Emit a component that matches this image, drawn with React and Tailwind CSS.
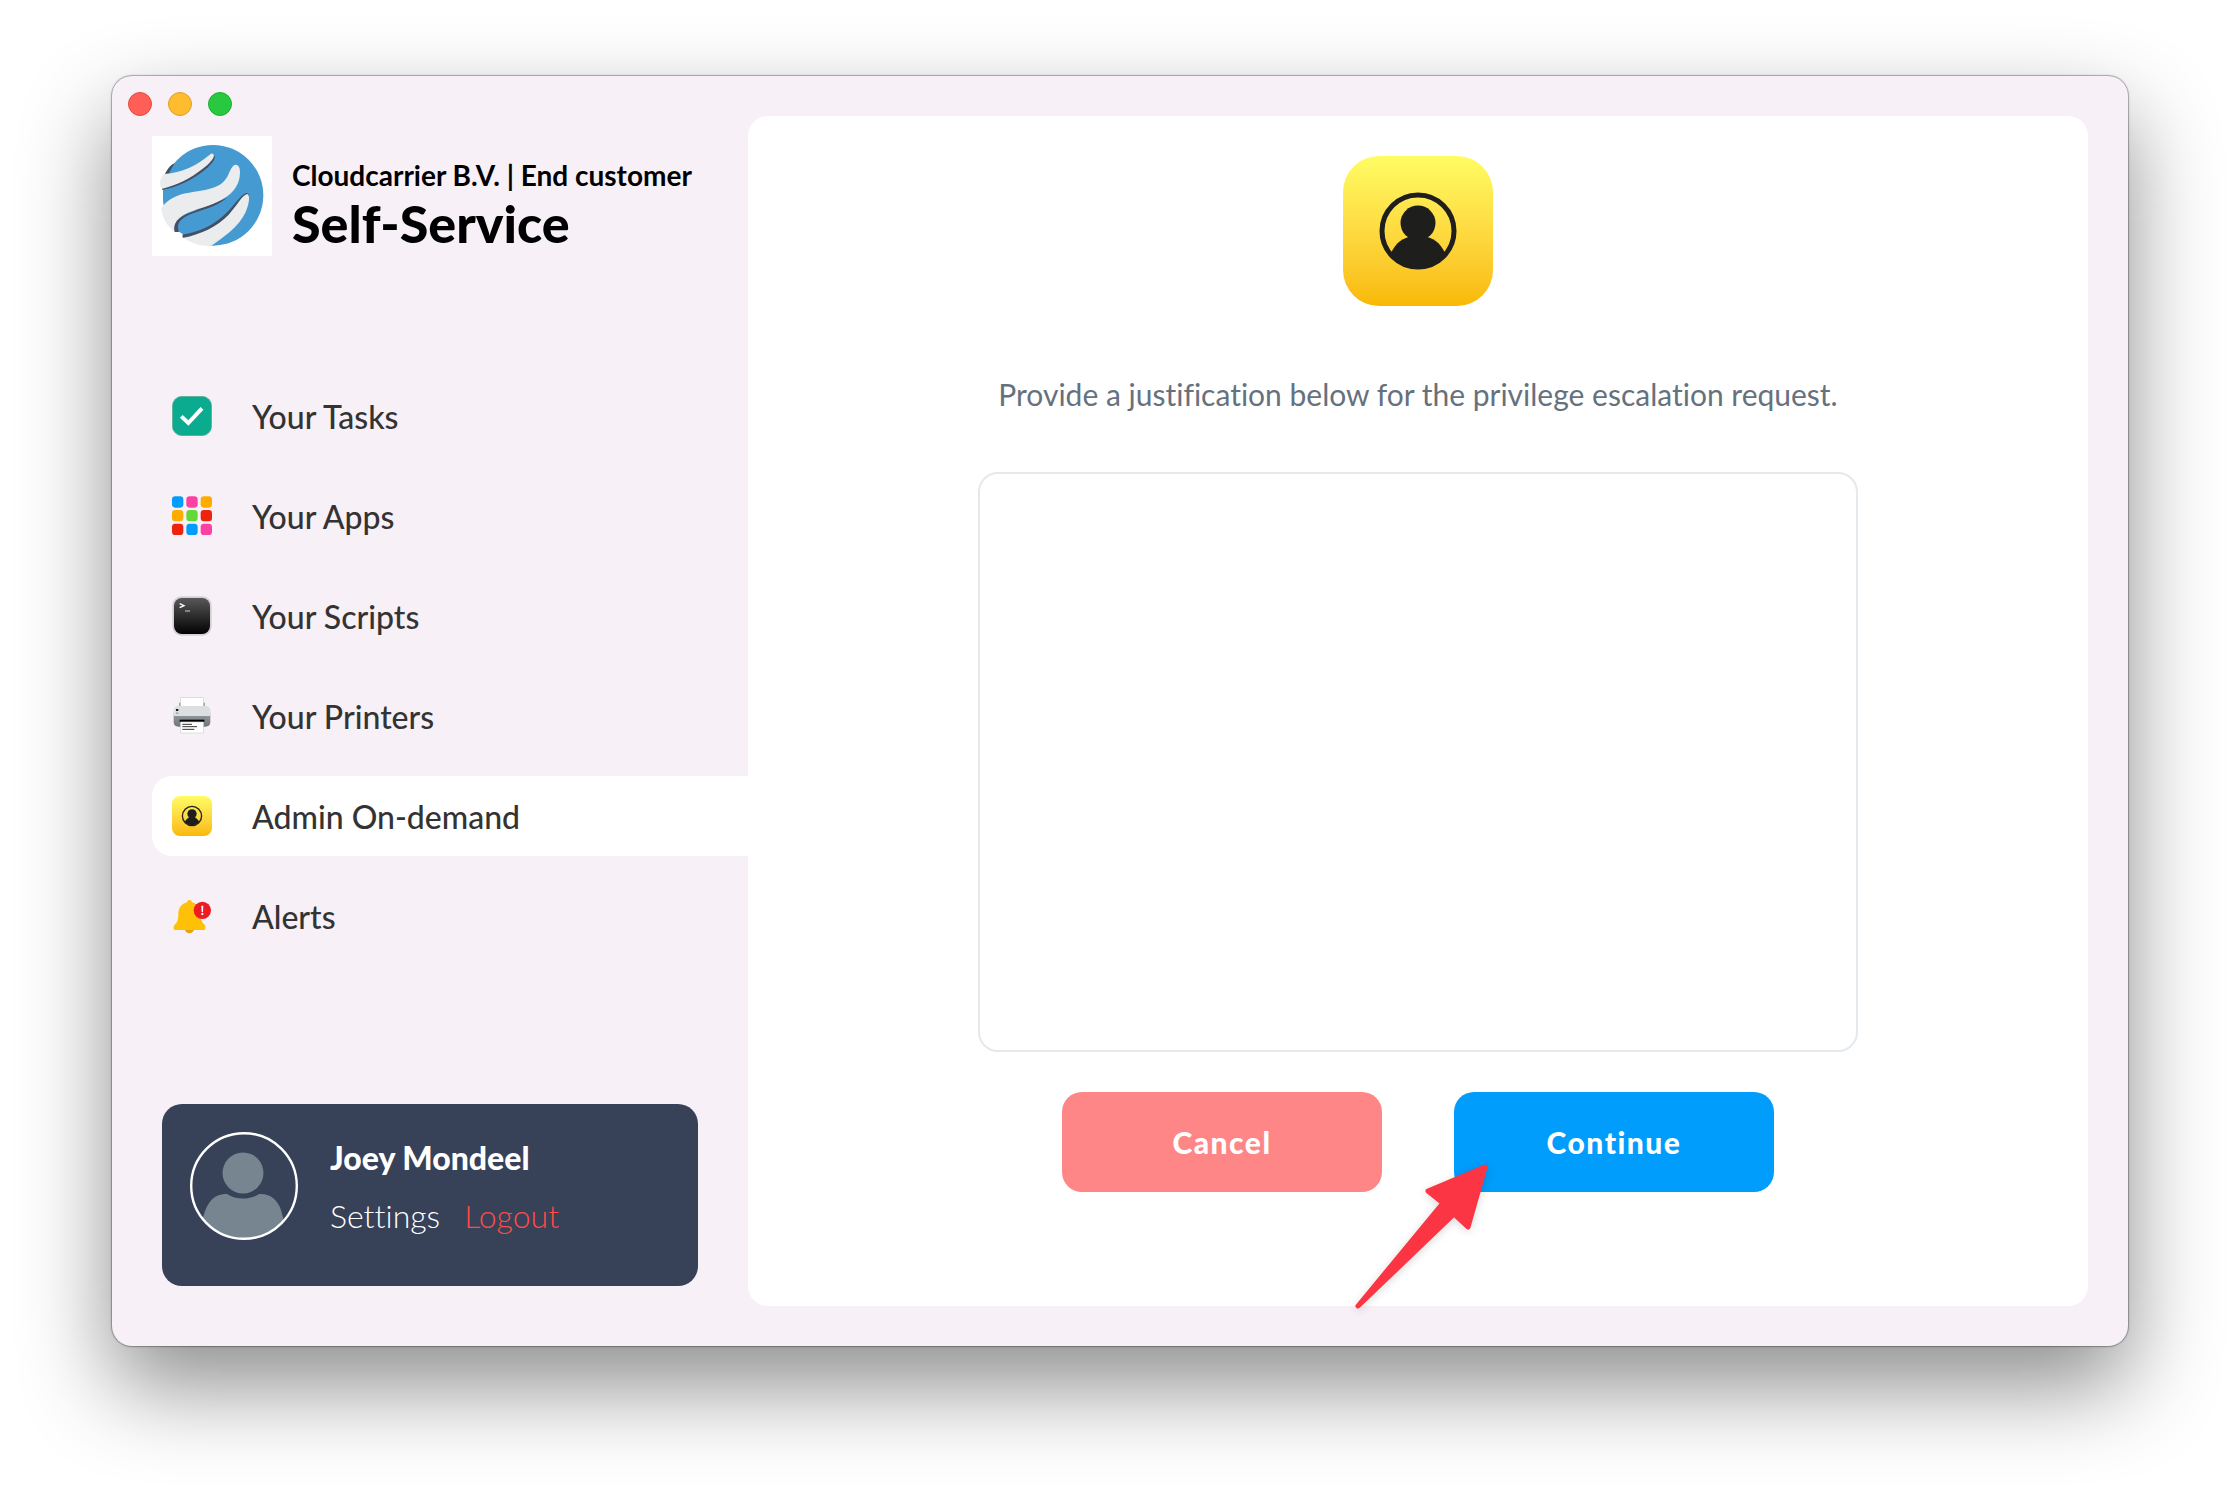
import { clsx } from "clsx";

function Logo() {
  return (
    <svg viewBox="36 18 360 360" className="size-30 shrink-0 bg-white" role="img" aria-label="Cloudcarrier">
      <circle cx="219" cy="196" r="151" fill="#459bd1" />
      <path d="M60 125 L70 125 L68 230 L50 240 Z" fill="#fff" />
      <path d="M72 138 C80 122 90 104 104 100 C98 110 92 120 86 132 Z" fill="#454f66" />
      <path d="M66 180 C110 172 155 152 193 121 C208 108 222 95 225 80 L218 72 L68 168 Z" fill="#454f66" />
      <path d="M74 132 C125 128 172 106 209 74 Q219 66 222 77 C220 88 206 102 190 115 C150 147 110 166 67 176 Q59 170 60 156 Q64 136 74 132 Z" fill="#ebecee" />
      <path d="M262 203 C225 232 190 238 155 251 C130 261 116 272 114 288 L116 306 Q108 311 102 304 C98 285 108 268 135 254 Z" fill="#454f66" />
      <path d="M64 236 C78 212 102 198 137 190 C195 178 238 180 262 140 C271 122 276 104 288 104 C301 106 302 126 298 146 C290 184 256 206 220 221 C180 237 132 245 110 272 C102 284 101 294 104 305 C82 290 67 264 64 236 Z" fill="#ebecee" />
      <path d="M126 314 C175 308 225 284 258 250 C290 218 306 188 322 189 L328 196 L270 262 L160 326 L127 323 Z" fill="#454f66" />
      <path d="M322 192 C331 196 328 222 316 248 C296 290 250 322 214 347 C178 350 148 336 130 323 C180 314 232 290 266 254 C292 226 307 194 322 192 Z" fill="#ebecee" />
      <path d="M100 306 L118 306 L128 312 L127 322 L134 328 L110 330 L92 306 Z" fill="#fff" />
    </svg>
  );
}

function TasksIcon() {
  return (
    <svg viewBox="0 0 120 120" className="size-10">
      <rect x="1" y="1" width="118" height="118" rx="29" fill="#0aab8e" stroke="#6fa79c" strokeWidth="2" />
      <path d="M28 61 L49 81 L90 37" fill="none" stroke="#fff" strokeWidth="12" />
    </svg>
  );
}

const APP_COLORS = [
  ["#029dfb", "#fc41a4", "#feac02"],
  ["#feac02", "#62d937", "#ef220d"],
  ["#ef220d", "#029dfb", "#fc41a4"],
];

function AppsIcon() {
  return (
    <svg viewBox="0 0 120 120" className="size-10">
      {APP_COLORS.map((row, y) =>
        row.map((color, x) => (
          <rect key={`${x}-${y}`} x={x * 43} y={y * 41 + 1} width="34" height="34" rx="10" fill={color} />
        ))
      )}
    </svg>
  );
}

function ScriptsIcon() {
  return (
    <svg viewBox="0 0 120 120" className="size-10">
      <defs>
        <linearGradient id="scripts" x2="0" y2="1">
          <stop stopColor="#585858" />
          <stop offset="1" stopColor="#020202" />
        </linearGradient>
      </defs>
      <rect x="1" y="1" width="118" height="118" rx="28" fill="#d2d0d2" />
      <rect x="6" y="6" width="108" height="108" rx="24" fill="url(#scripts)" />
      <path d="M23 23 L36 29 L23 35" fill="none" stroke="#fff" strokeWidth="4" />
      <path d="M39 45 H54" stroke="#aaa" strokeWidth="4" />
    </svg>
  );
}

function PrintersIcon() {
  return (
    <svg viewBox="0 0 120 120" className="size-10">
      <defs>
        <linearGradient id="printer" x2="0" y2="1">
          <stop stopColor="#999da2" />
          <stop offset="1" stopColor="#6f757c" />
        </linearGradient>
      </defs>
      <rect x="22" y="20" width="76" height="20" fill="#7a7f85" />
      <rect x="26" y="5" width="68" height="32" fill="#fff" stroke="#d6d3d8" strokeWidth="2" />
      <path d="M5 50 H115 V78 Q115 92 100 92 H20 Q5 92 5 78 Z" fill="url(#printer)" />
      <path d="M5 60 V44 Q6 30 19 30 H101 Q114 30 115 44 V60 Z" fill="#dcdfdf" />
      <rect x="12" y="39" width="7" height="6" fill="#151515" />
      <rect x="12" y="49" width="7" height="5" fill="#aaa" />
      <rect x="23" y="71" width="74" height="7" fill="#000" />
      <rect x="26" y="78" width="68" height="33" fill="#fff" stroke="#d2cfd4" strokeWidth="2" />
      <path d="M31 85 H60 M31 92 H75 M31 100 H67" stroke="#333" strokeWidth="3" />
    </svg>
  );
}

function AdminIcon({ className }) {
  return (
    <div className={clsx("bg-linear-to-b from-[#fffc63] to-[#f9b900]", className)}>
      <svg viewBox="0 0 150 150" className="size-full">
        <circle cx="75" cy="75" r="36" fill="none" stroke="#1e1e1c" strokeWidth="5" />
        <circle cx="75" cy="67" r="17.5" fill="#1e1e1c" />
        <path d="M48 97 C53 86 61 82 66 81 H84 C89 82 97 86 102 97 A35 35 0 0 1 48 97 Z" fill="#1e1e1c" />
      </svg>
    </div>
  );
}

function AlertsIcon() {
  return (
    <svg viewBox="0 0 120 120" className="size-10">
      <path d="M38 100 H67 Q62 112 52 112 Q42 112 38 100 Z" fill="#e5a405" />
      <path
        d="M45 19 Q46 12 52 12 Q59 12 60 19 C76 23 85 36 85 52 C85 68 87 76 96 84 Q101 88 100 94 V98 Q100 102 95 102 H10 Q5 102 5 98 V92 Q5 89 10 84 C18 76 19 68 19 52 C19 36 29 23 45 19 Z"
        fill="#ffc107"
      />
      <circle cx="91" cy="43" r="26" fill="#ed1c24" />
      <path d="M88 29 H94 L93 48 H89 Z" fill="#fff" />
      <circle cx="91" cy="54" r="3.5" fill="#fff" />
    </svg>
  );
}

function Avatar() {
  return (
    <svg viewBox="0 0 108 108" className="size-27 shrink-0">
      <defs>
        <clipPath id="avatar">
          <circle cx="54" cy="54" r="53" />
        </clipPath>
      </defs>
      <g clipPath="url(#avatar)" fill="#778590">
        <circle cx="53" cy="41" r="20.5" />
        <path d="M12 90 C16 72 22 62 37 62 C46 68 60 68 69 62 C80 61 88 68 91 78 L96 96 L80 108 H24 Z" />
      </g>
      <circle cx="54" cy="54" r="52.8" fill="none" stroke="#fff" strokeWidth="2.4" />
    </svg>
  );
}

function Arrow() {
  return (
    <svg
      viewBox="0 0 150 164"
      className="pointer-events-none absolute top-16 -left-27 h-41 w-[150px] drop-shadow-[0_2px_4px_rgba(0,0,0,0.15)]"
      aria-hidden="true"
    >
      <path
        d="M139 11 L82 35 L97 47 L12 150 L108 58 L122 71 Z"
        fill="#fb3543"
        stroke="#fb3543"
        strokeWidth="5"
        strokeLinejoin="round"
      />
    </svg>
  );
}

const NAV_ITEMS = [
  { label: "Your Tasks", icon: <TasksIcon /> },
  { label: "Your Apps", icon: <AppsIcon /> },
  { label: "Your Scripts", icon: <ScriptsIcon /> },
  { label: "Your Printers", icon: <PrintersIcon /> },
  { label: "Admin On-demand", icon: <AdminIcon className="size-10 rounded-lg" />, active: true },
  { label: "Alerts", icon: <AlertsIcon /> },
];

function Sidebar() {
  return (
    <aside className="flex w-[636px] shrink-0 flex-col pt-4 pl-10">
      <div className="-ml-6 flex gap-4">
        <button type="button" aria-label="Close" className="size-6 rounded-full border border-[#e24b42] bg-[#ff5f57]" />
        <button type="button" aria-label="Minimize" className="size-6 rounded-full border border-[#e0a028] bg-[#febc2e]" />
        <button type="button" aria-label="Zoom" className="size-6 rounded-full border border-[#1fae34] bg-[#28c840]" />
      </div>

      <header className="mt-5 flex items-center gap-5">
        <Logo />
        <div className="pt-3.5 whitespace-nowrap text-black">
          <div className="text-[28px] leading-10 font-bold">Cloudcarrier B.V. | End customer</div>
          <h1 className="text-[52px] leading-14 font-black">Self-Service</h1>
        </div>
      </header>

      <nav className="mt-30 flex flex-col gap-5">
        {NAV_ITEMS.map((item) => (
          <a
            key={item.label}
            href="#"
            aria-current={item.active ? "page" : undefined}
            className={clsx(
              "flex h-20 items-center gap-10 rounded-l-[20px] pl-5 text-[32px] font-medium text-[#333]",
              item.active && "bg-white"
            )}
          >
            {item.icon}
            <span className="pt-0.5">{item.label}</span>
          </a>
        ))}
      </nav>

      <div className="mt-auto mr-[50px] mb-5 ml-2.5 flex gap-8 rounded-[20px] bg-[#374158] px-7 pt-7 pb-[46px] text-[32px] text-white">
        <Avatar />
        <div className="flex flex-col gap-3">
          <div className="leading-13 font-black">Joey Mondeel</div>
          <div className="flex gap-6 leading-10 font-light [font-variant-ligatures:none]">
            <a href="#">Settings</a>
            <a href="#" className="text-[#ff4b46]">
              Logout
            </a>
          </div>
        </div>
      </div>
    </aside>
  );
}

export default function App() {
  return (
    <div className="bg-white px-28 pt-19 pb-37 font-['Lato',sans-serif]">
      <div className="flex rounded-[20px] bg-[#f7f0f7] pr-10 pb-10 shadow-[0_0_0_1px_rgba(0,0,0,0.2),0_0_3px_rgba(0,0,0,0.3),0_40px_90px_rgba(0,0,0,0.45)]">
        <Sidebar />
        <main className="mt-10 flex flex-1 flex-col items-center rounded-[20px] bg-white pt-10 pb-[114px]">
          <AdminIcon className="size-[150px] rounded-[36px]" />
          <label
            htmlFor="justification"
            className="mt-17 text-[30px] leading-10 text-[#66717e] [font-variant-ligatures:none]"
          >
            Provide a justification below for the privilege escalation request.
          </label>
          <textarea
            id="justification"
            className="mt-[58px] h-[580px] w-[880px] resize-none rounded-[20px] border-2 border-[#e4e9ed] bg-white p-5 text-[30px]"
          />
          <div className="mt-10 flex gap-18 text-[30px] font-black tracking-wider text-white">
            <button type="button" className="h-25 w-80 rounded-[20px] bg-[#ff8686]">
              Cancel
            </button>
            <div className="relative">
              <button type="button" className="h-25 w-80 rounded-[20px] bg-[#009dfc]">
                Continue
              </button>
              <Arrow />
            </div>
          </div>
        </main>
      </div>
    </div>
  );
}
